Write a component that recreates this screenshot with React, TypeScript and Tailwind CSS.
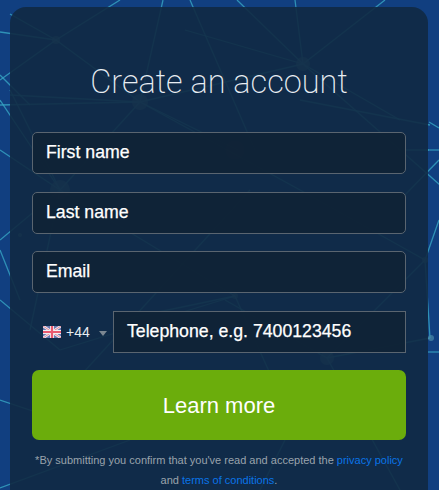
import React from "react";

const lines: [number, number, number, number][] = [
  [0, 32, 56, 40], [10, 14, 56, 40], [56, 40, 140, 102], [56, 40, 120, 0], [0, 80, 56, 40],
  [140, 102, 303, 64], [140, 102, 10, 95], [140, 102, 0, 105], [140, 102, 238, 150], [140, 102, 60, 190],
  [303, 64, 295, 0], [303, 64, 385, 0], [303, 64, 185, 30], [303, 64, 440, 185], [303, 64, 237, 0],
  [163, 0, 140, 102], [190, 0, 255, 150], [140, 102, 300, 190], [303, 64, 400, 120],
  [0, 75, 30, 105], [0, 150, 60, 190], [10, 90, 60, 190], [60, 190, 235, 296], [60, 190, 0, 240],
  [0, 100, 60, 190], [430, 125, 300, 100], [429, 122, 439, 128], [429, 150, 300, 150], [439, 150, 428, 150],
  [425, 260, 300, 190], [425, 260, 327, 358], [425, 260, 439, 220], [430, 338, 327, 358], [430, 338, 425, 260],
  [327, 358, 225, 300], [327, 358, 400, 490], [235, 296, 120, 320], [235, 296, 60, 350], [60, 350, 0, 300],
  [0, 400, 120, 440], [0, 488, 130, 440], [285, 440, 260, 490], [60, 190, 30, 330], [235, 296, 300, 440],
  [428, 352, 439, 352], [250, 190, 40, 420], [0, 250, 20, 300], [400, 200, 439, 160],
];

const nodes: [number, number, number][] = [
  [56, 40, 4], [140, 102, 8], [303, 64, 7], [60, 190, 10], [235, 150, 10], [425, 260, 3],
  [327, 358, 7], [431, 338, 3], [235, 296, 3], [20, 235, 2],
];

function Field({ label, extra }: { label: string; extra?: string }) {
  return (
    <div className={"flex h-[42px] items-center rounded-[5px] border border-[#5a6570] bg-[#0f2235]/90 pl-[13px] text-[17.7px] leading-none text-white [-webkit-text-stroke:0.25px_white] " + (extra ?? "")}>
      {label}
    </div>
  );
}

function Flag() {
  return (
    <svg width="18" height="12" viewBox="0 0 18 12" className="shrink-0">
      <rect width="18" height="12" fill="#6a78b0" />
      <path d="M0 0 18 12M18 0 0 12" stroke="#f2eef0" strokeWidth="2.6" />
      <path d="M0 0 18 12M18 0 0 12" stroke="#e3798d" strokeWidth="0.9" />
      <path d="M9 0V12M0 6H18" stroke="#f2eef0" strokeWidth="4" />
      <path d="M9 0V12M0 6H18" stroke="#ea5a70" strokeWidth="2.2" />
    </svg>
  );
}

export default function App() {
  return (
    <div className="relative h-[490px] w-[439px] overflow-hidden bg-[#123c78] font-['Liberation_Sans',Arial,sans-serif]">
      <svg className="absolute inset-0" width="439" height="490" viewBox="0 0 439 490">
        <rect width="439" height="490" fill="#113f80" />
        {lines.map(([a, b, c, d], i) => (
          <line key={i} x1={a} y1={b} x2={c} y2={d} stroke="#37a6c4" strokeWidth="1.3" opacity="0.8" />
        ))}
        {nodes.map(([x, y, r], i) => (
          <circle key={i} cx={x} cy={y} r={r} fill="#4a8aa8" opacity="0.7" />
        ))}
      </svg>

      <div className="relative ml-[10px] mt-[7px] h-[500px] w-[418px] rounded-t-[16px] bg-[#112a43]/[0.91] px-[22px]">
        <h1 className="pt-[55px] text-center font-['Roboto',sans-serif] text-[32.5px] font-[200] leading-[40px] text-[#e8edf2]">
          Create an account
        </h1>
        <div className="mt-[30px] flex flex-col">
          <Field label="First name" />
          <Field label="Last name" extra="mt-[18px]" />
          <Field label="Email" extra="mt-[17px]" />
          <div className="mt-[18px] flex h-[42px] items-center">
            <div className="flex w-[81px] items-center pl-[11px] text-[14px] text-[#e8edf2]">
              <Flag />
              <span className="ml-[5px]">+44</span>
              <span className="ml-[9px] mt-[2px] h-0 w-0 border-x-[4px] border-t-[5px] border-x-transparent border-t-[#7b8792]" />
            </div>
            <div className="flex h-[42px] flex-1 items-center border border-[#5a6570] bg-[#0f2235]/90 pl-[13px] text-[17.7px] leading-none text-white [-webkit-text-stroke:0.25px_white]">
              Telephone, e.g. 7400123456
            </div>
          </div>
        </div>
        <button className="mt-[17px] flex h-[70px] w-full items-center justify-center rounded-[7px] bg-[#6bad0c] text-[22px] text-white">
          Learn more
        </button>
        <p className="mt-[10px] whitespace-nowrap text-center text-[11px] leading-[20px] text-[#9aa3ac]">
          *By submitting you confirm that you've read and accepted the{" "}
          <span className="text-[#0a74e8]">privacy policy</span>
          <br />
          and <span className="text-[#0a74e8]">terms of conditions</span>.
        </p>
      </div>
    </div>
  );
}
